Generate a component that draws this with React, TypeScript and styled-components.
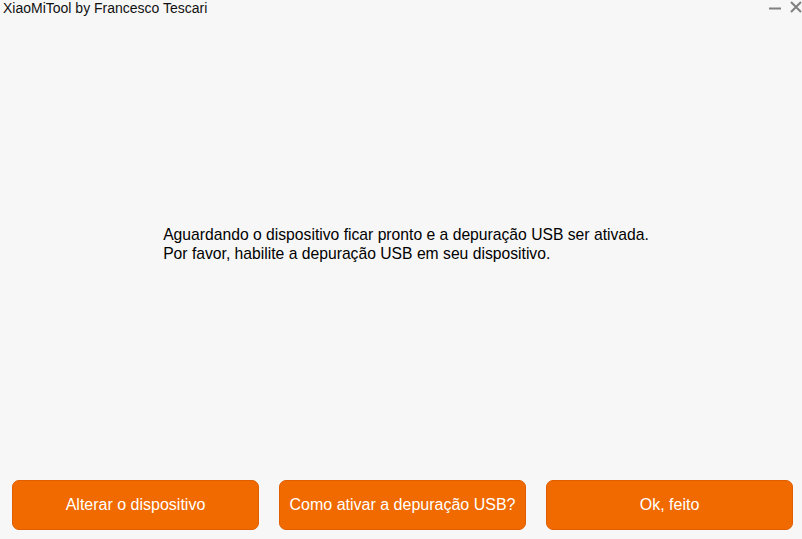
import React from "react"
import styled, { createGlobalStyle } from "styled-components"

const GlobalStyle = createGlobalStyle`
  html, body {
    margin: 0;
    padding: 0;
    background: #f7f7f7;
  }
  body {
    font-family: "Liberation Sans", Arial, sans-serif;
    color: #000;
  }
`

const Window = styled.div`
  width: 802px;
  height: 539px;
  display: flex;
  flex-direction: column;
  background: #f7f7f7;
  overflow: hidden;
`

const TitleBar = styled.div`
  height: 20px;
  display: flex;
  align-items: flex-start;
  justify-content: space-between;
`

const Title = styled.div`
  font-size: 14px;
  line-height: 16px;
  padding-left: 3px;
  color: #111;
`

const WindowControls = styled.div`
  display: flex;
  align-items: flex-start;
  gap: 9px;
  padding-top: 1px;
`

const ControlButton = styled.button`
  border: none;
  background: none;
  padding: 0;
  width: 12px;
  height: 12px;
  display: flex;
  cursor: pointer;
`

const Content = styled.div`
  flex: 1;
  display: flex;
  align-items: center;
  justify-content: center;
  padding-bottom: 12px;
`

const Message = styled.p`
  margin: 0;
  font-size: 15.7px;
  line-height: 19px;
  padding-left: 10px;
`

const Actions = styled.div`
  display: grid;
  grid-template-columns: repeat(3, 247px);
  gap: 20px;
  padding: 0 9px 9px 12px;
`

const ActionButton = styled.button`
  height: 50px;
  border: 1px solid #e05e00;
  border-radius: 7px;
  background: #f06a00;
  color: #fff;
  font-family: "Liberation Sans", Arial, sans-serif;
  font-size: 16px;
  cursor: pointer;
  padding: 0;
`

export default function App() {
  return (
    <>
      <GlobalStyle />
      <Window>
        <TitleBar>
          <Title>XiaoMiTool by Francesco Tescari</Title>
          <WindowControls>
            <ControlButton aria-label="minimize">
              <svg width="12" height="12" viewBox="0 0 12 12">
                <path d="M0 7.5 H12" stroke="#808080" strokeWidth="2" />
              </svg>
            </ControlButton>
            <ControlButton aria-label="close">
              <svg width="12" height="12" viewBox="0 0 12 12">
                <path d="M1 1 L11 11 M11 1 L1 11" stroke="#808080" strokeWidth="2" />
              </svg>
            </ControlButton>
          </WindowControls>
        </TitleBar>
        <Content>
          <Message>
            Aguardando o dispositivo ficar pronto e a depuração USB ser ativada.
            <br />
            Por favor, habilite a depuração USB em seu dispositivo.
          </Message>
        </Content>
        <Actions>
          <ActionButton>Alterar o dispositivo</ActionButton>
          <ActionButton>Como ativar a depuração USB?</ActionButton>
          <ActionButton>Ok, feito</ActionButton>
        </Actions>
      </Window>
    </>
  )
}
